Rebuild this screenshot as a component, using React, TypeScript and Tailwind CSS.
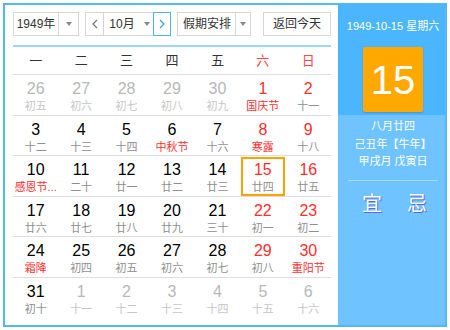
import React from "react";

type Day = { n: number; l: string; red?: boolean; lred?: boolean; other?: boolean; sel?: boolean };

const rows: Day[][] = [
  [
    { n: 26, l: "初五", other: true },
    { n: 27, l: "初六", other: true },
    { n: 28, l: "初七", other: true },
    { n: 29, l: "初八", other: true },
    { n: 30, l: "初九", other: true },
    { n: 1, l: "国庆节", red: true, lred: true },
    { n: 2, l: "十一", red: true },
  ],
  [
    { n: 3, l: "十二" },
    { n: 4, l: "十三" },
    { n: 5, l: "十四" },
    { n: 6, l: "中秋节", lred: true },
    { n: 7, l: "十六" },
    { n: 8, l: "寒露", red: true, lred: true },
    { n: 9, l: "十八", red: true },
  ],
  [
    { n: 10, l: "感恩节...", lred: true },
    { n: 11, l: "二十" },
    { n: 12, l: "廿一" },
    { n: 13, l: "廿二" },
    { n: 14, l: "廿三" },
    { n: 15, l: "廿四", red: true, sel: true },
    { n: 16, l: "廿五", red: true },
  ],
  [
    { n: 17, l: "廿六" },
    { n: 18, l: "廿七" },
    { n: 19, l: "廿八" },
    { n: 20, l: "廿九" },
    { n: 21, l: "三十" },
    { n: 22, l: "初一", red: true },
    { n: 23, l: "初二", red: true },
  ],
  [
    { n: 24, l: "霜降", lred: true },
    { n: 25, l: "初四" },
    { n: 26, l: "初五" },
    { n: 27, l: "初六" },
    { n: 28, l: "初七" },
    { n: 29, l: "初八", red: true },
    { n: 30, l: "重阳节", red: true, lred: true },
  ],
  [
    { n: 31, l: "初十" },
    { n: 1, l: "十一", other: true },
    { n: 2, l: "十二", other: true },
    { n: 3, l: "十三", other: true },
    { n: 4, l: "十四", other: true },
    { n: 5, l: "十五", other: true },
    { n: 6, l: "十六", other: true },
  ],
];

const weekdays = ["一", "二", "三", "四", "五", "六", "日"];

const Caret = () => (
  <span className="w-0 h-0 border-x-[3.5px] border-x-transparent border-t-[4px] border-t-[#8a8a8a]" />
);

const Chevron = ({ dir, color }: { dir: "l" | "r"; color: string }) => (
  <svg width="6" height="10" viewBox="0 0 6 10">
    <path d={dir === "l" ? "M5 1 1 5l4 4" : "M1 1l4 4-4 4"} stroke={color} strokeWidth="1.2" fill="none" />
  </svg>
);

const DayCell = ({ d }: { d: Day }) => {
  const numColor = d.other ? "text-[#b8b8b8]" : d.red ? "text-[#ff2f2f]" : "text-black";
  const lunarColor = d.lred ? "text-[#ff2f2f]" : d.other ? "text-[#c6c6c6]" : "text-[#8f8f8f]";
  return (
    <div className="relative flex flex-col items-center pt-[5px]">
      {d.sel && <div className="absolute left-[1px] right-[1px] top-[1px] bottom-0 border-2 border-[#ffa200]" />}
      <span className={`text-[16px] leading-[18px] font-['Liberation_Sans',sans-serif] ${numColor}`}>{d.n}</span>
      <span className={`mt-[1px] text-[11px] leading-[14px] whitespace-nowrap ${lunarColor}`}>{d.l}</span>
    </div>
  );
};

export default function App() {
  return (
    <div className="w-[450px] h-[330px] bg-white p-[3px] font-['Liberation_Sans','Noto_Sans_CJK_SC',sans-serif]">
      <div className="flex h-full border-2 border-[#52b6f9]">
        {/* calendar */}
        <div className="w-[333px] pl-[8px] pr-[7px] pt-[7px]">
          <div className="flex h-[24px] text-[12px] text-[#333]">
            <div className="flex w-[66px] border border-[#d6d6d6]">
              <span className="flex-1 flex items-center justify-center">1949年</span>
              <span className="w-[20px] flex items-center justify-center border-l border-[#d6d6d6]">
                <Caret />
              </span>
            </div>
            <div className="ml-[6px] flex w-[86px] border border-[#d6d6d6]">
              <span className="w-[18px] flex items-center justify-center border-r border-[#d6d6d6]">
                <Chevron dir="l" color="#777" />
              </span>
              <span className="flex-1 flex items-center justify-center gap-[9px] pl-[2px]">
                10月
                <Caret />
              </span>
              <span className="w-[18px] -my-px -mr-px flex items-center justify-center border border-[#4fb1f6] bg-white">
                <Chevron dir="r" color="#3a9ef0" />
              </span>
            </div>
            <div className="ml-[6px] flex w-[74px] border border-[#d6d6d6]">
              <span className="flex-1 flex items-center justify-center pl-[1px]">假期安排</span>
              <span className="w-[15px] flex items-center justify-center border-l border-[#d6d6d6]">
                <Caret />
              </span>
            </div>
            <div className="ml-auto w-[68px] flex items-center justify-center border border-[#d6d6d6]">
              返回今天
            </div>
          </div>

          <div className="mt-[9px] h-[2px] bg-[#9fd4fb]" />

          <div className="grid grid-cols-7 h-[28px] border-b border-[#dedede] text-[13px]">
            {weekdays.map((w, i) => (
              <span
                key={w}
                className={`flex items-center justify-center ${i >= 5 ? "text-[#ff4545]" : "text-[#333]"}`}
              >
                {w}
              </span>
            ))}
          </div>

          {rows.map((r, i) => (
            <div
              key={i}
              className={`grid grid-cols-7 h-[40.5px] ${i < rows.length - 1 ? "border-b border-[#dedede]" : ""}`}
            >
              {r.map((d, j) => (
                <DayCell key={j} d={d} />
              ))}
            </div>
          ))}
        </div>

        {/* side panel */}
        <div className="flex-1 flex flex-col text-white">
          <div className="bg-[#4bb6fd] flex flex-col items-center pl-[3px] pt-[12px] pb-[3px]">
            <span className="text-[11px] leading-[18px]">1949-10-15 星期六</span>
            <div className="mt-[12px] w-[60px] h-[65px] rounded-[2px] bg-[#ffa800] shadow-[0_1px_2px_rgba(60,80,160,0.35)] flex items-center justify-center">
              <span className="text-[40px] leading-none font-['Liberation_Sans',sans-serif]">15</span>
            </div>
          </div>
          <div className="flex-1 bg-[#6fc4ff] flex flex-col items-center pl-[3px] text-[11px] leading-[17.5px]">
            <span className="mt-[3px]">八月廿四</span>
            <span>己丑年【牛年】</span>
            <span>甲戌月 戊寅日</span>
            <div className="mt-[9px] w-[90px] h-px bg-[#a9dcff]" />
            <div className="mt-[12px] pl-[3px] flex gap-[25px] text-[20px] leading-[22px] [text-shadow:1px_1px_0_#5c66e6]">
              <span>宜</span>
              <span>忌</span>
            </div>
          </div>
        </div>
      </div>
    </div>
  );
}
